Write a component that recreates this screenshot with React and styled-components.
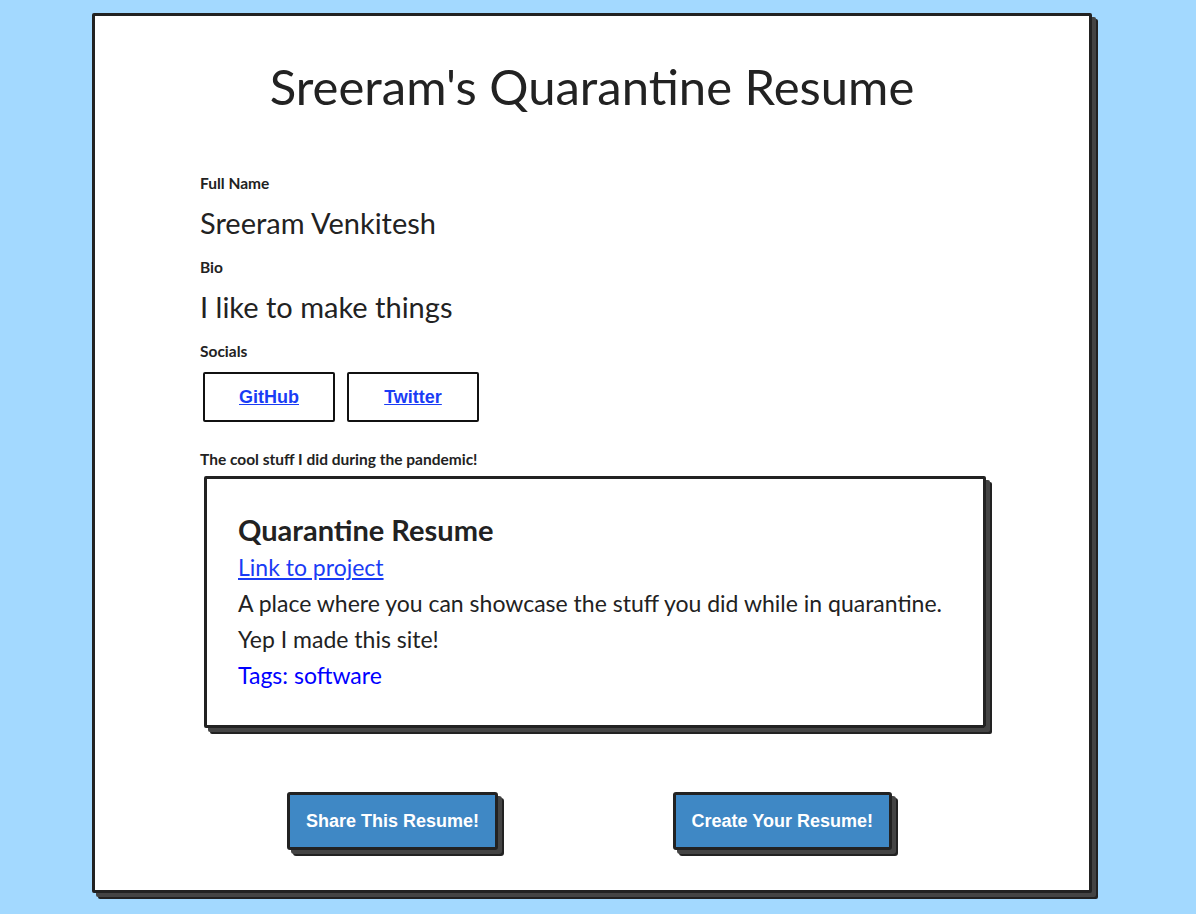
import React from 'react';
import styled, { createGlobalStyle } from 'styled-components';

const GlobalStyle = createGlobalStyle`
  html, body {
    margin: 0;
    padding: 0;
    background: #a3d9ff;
  }
  body {
    font-family: Lato, "Open Sans", sans-serif;
    color: #222;
  }
`;

const project = {
  title: 'Quarantine Resume',
  link: 'Link to project',
  description: 'A place where you can showcase the stuff you did while in quarantine. Yep I made this site!',
  tags: 'software',
};

const App = () => {
  return (
    <>
      <GlobalStyle />
      <Page>
        <Panel>
          <Title>Sreeram's Quarantine Resume</Title>
          <Content>
            <Label>Full Name</Label>
            <Value>Sreeram Venkitesh</Value>
            <Label>Bio</Label>
            <Value>I like to make things</Value>
            <Label>Socials</Label>
            <Socials>
              <SocialBox>
                <SocialLink href="#">GitHub</SocialLink>
              </SocialBox>
              <SocialBox>
                <SocialLink href="#">Twitter</SocialLink>
              </SocialBox>
            </Socials>
            <Label $spaced>The cool stuff I did during the pandemic!</Label>
            <Card>
              <CardTitle>{project.title}</CardTitle>
              <CardLink href="#">{project.link}</CardLink>
              <CardText>{project.description}</CardText>
              <Tags>Tags: {project.tags}</Tags>
            </Card>
          </Content>
          <Actions>
            <ActionButton>Share This Resume!</ActionButton>
            <ActionButton>Create Your Resume!</ActionButton>
          </Actions>
        </Panel>
      </Page>
    </>
  );
};

export default App;

const Page = styled.div`
  padding: 13px 0 15px 92px;
`;

const Panel = styled.div`
  width: 994px;
  height: 874px;
  background: white;
  border: 3px solid #222;
  border-radius: 2px;
  box-shadow: 4px 4px 0 #444, 6px 6px 0 #222;
  display: flex;
  flex-direction: column;
`;

const Title = styled.h1`
  margin: 42px 0 0;
  text-align: center;
  font-size: 49px;
  font-weight: 400;
  line-height: 56px;
  color: #222;
`;

const Content = styled.div`
  display: flex;
  flex-direction: column;
  align-items: flex-start;
  padding: 59px 102px 0 105px;
`;

const Label = styled.div`
  font-size: 15.5px;
  font-weight: 700;
  line-height: 20px;
  margin-top: ${(p) => (p.$spaced ? '27px' : '0')};
`;

const Value = styled.div`
  font-size: 29px;
  line-height: 36px;
  margin: 12px 0 16px;
`;

const Socials = styled.div`
  display: flex;
  gap: 12px;
  margin: 11px 0 0 3px;
`;

const SocialBox = styled.div`
  width: 128px;
  height: 46px;
  border: 2px solid #111;
  border-radius: 2px;
  display: flex;
  align-items: center;
  justify-content: center;
`;

const SocialLink = styled.a`
  font-family: "Liberation Sans", Arial, sans-serif;
  font-size: 18px;
  font-weight: 700;
  color: #1a3cf5;
  text-decoration: underline;
`;

const Card = styled.div`
  box-sizing: border-box;
  width: 782px;
  margin: 7px 0 0 4px;
  padding: 33px 31px 32px;
  border: 3px solid #222;
  border-radius: 2px;
  box-shadow: 4px 4px 0 #444, 6px 6px 0 #222;
  font-size: 23px;
  line-height: 36px;
`;

const CardTitle = styled.div`
  font-size: 29px;
  font-weight: 700;
  line-height: 36px;
  margin-bottom: 1px;
`;

const CardLink = styled.a`
  display: block;
  color: #1a3cf5;
  text-decoration: underline;
`;

const CardText = styled.div``;

const Tags = styled.div`
  color: #0000ff;
`;

const Actions = styled.div`
  display: flex;
  justify-content: space-between;
  padding: 0 197px 0 192px;
  margin-top: 64px;
`;

const ActionButton = styled.button`
  height: 58px;
  padding: 0 16px;
  background: #3f88c5;
  color: white;
  border: 3px solid #222;
  border-radius: 3px;
  box-shadow: 4px 4px 0 #444, 6px 6px 0 #222;
  font-family: "Liberation Sans", Arial, sans-serif;
  font-size: 18px;
  font-weight: 700;
`;
